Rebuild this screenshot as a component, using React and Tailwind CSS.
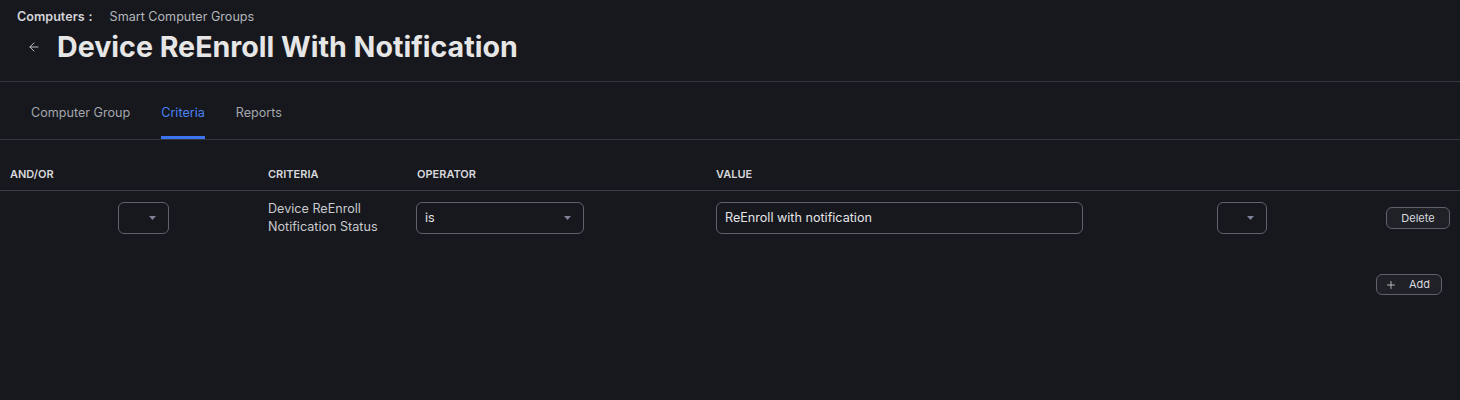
import { ArrowLeft, Plus } from 'lucide-react';

function Caret() {
  return (
    <svg width="7" height="4" viewBox="0 0 7 4" className="fill-[#7d8199]">
      <path d="M0 0h7L3.5 4z" />
    </svg>
  );
}

function Select({ value, className }) {
  return (
    <div
      className={`flex h-8 items-center justify-between rounded-md border border-[#5f626a] pl-2 pr-[12px] text-[12.6px] text-[#e4e4e7] ${className}`}
    >
      <span>{value}</span>
      <Caret />
    </div>
  );
}

export default function App() {
  const tabs = ['Computer Group', 'Criteria', 'Reports'];

  return (
    <div className="min-h-[400px] w-full bg-[#16181d] font-['Inter','Liberation_Sans',sans-serif] text-[#e4e4e7]">
      {/* Header */}
      <div className="border-b border-[#33363d] pl-[17px] pt-[8px] pb-[17px]">
        <div className="flex items-center text-[12.6px] leading-[18px]">
          <span className="font-semibold text-[#d4d4d8]">Computers</span>
          <span className="ml-[4px] font-semibold text-[#d4d4d8]">:</span>
          <span className="ml-[17px] text-[#b4b6bb]">Smart Computer Groups</span>
        </div>
        <div className="mt-[3px] flex items-center">
          <ArrowLeft className="ml-[10px] h-[14px] w-[14px] text-[#c8c9cc]" strokeWidth={1.6} />
          <h1 className="ml-[16px] text-[28.6px] font-bold leading-[35px] text-[#e6e6e6]">
            Device ReEnroll With Notification
          </h1>
        </div>
      </div>

      {/* Tabs */}
      <div className="flex gap-[31px] border-b border-[#33363d] pl-[31px]">
        {tabs.map((t) => (
          <div
            key={t}
            className={`pt-[22px] pb-[14px] text-[12.6px] leading-[18px] border-b-[3px] ${
              t === 'Criteria' ? 'border-[#3b73f0] text-[#4b82f5]' : 'border-transparent text-[#a3a6ac]'
            }`}
          >
            {t}
          </div>
        ))}
      </div>

      {/* Table */}
      <table className="mt-[26px] w-full table-fixed border-collapse">
        <colgroup>
          <col className="w-[258px]" />
          <col className="w-[149px]" />
          <col className="w-[299px]" />
          <col className="w-[501px]" />
          <col className="w-[169px]" />
          <col />
        </colgroup>
        <thead>
          <tr className="border-b border-[#3a3d44] text-left text-[11px] font-semibold uppercase leading-[16px] text-[#d8d8dc]">
            <th className="pb-[8px] pl-[10px] font-semibold">AND/OR</th>
            <th className="pb-[8px] pl-[10px] font-semibold">Criteria</th>
            <th className="pb-[8px] pl-[10px] font-semibold">Operator</th>
            <th className="pb-[8px] pl-[10px] font-semibold">Value</th>
            <th className="pb-[8px]" />
            <th className="pb-[8px]" />
          </tr>
        </thead>
        <tbody>
          <tr className="align-middle">
            <td className="pt-[9px]">
              <Select value="" className="ml-[118px] w-[51px]" />
            </td>
            <td className="pt-[9px] pl-[10px] text-[12.6px] leading-[18px] text-[#c9cacd]">
              Device ReEnroll
              <br />
              Notification Status
            </td>
            <td className="pt-[9px] pl-[9px]">
              <Select value="is" className="w-[168px]" />
            </td>
            <td className="pt-[9px] pl-[10px]">
              <div className="flex h-8 w-[367px] items-center rounded-md border border-[#5f626a] px-2 text-[12.6px] text-[#e4e4e7]">
                ReEnroll with notification
              </div>
            </td>
            <td className="pt-[9px] pl-[10px]">
              <Select value="" className="w-[50px]" />
            </td>
            <td className="align-top pt-[16px] pl-[10px]">
              <button className="block h-[22px] w-[64px] rounded-md border border-[#5f626a] bg-[#1f2127] text-[11px] text-[#d8d8dc]">
                Delete
              </button>
            </td>
          </tr>
        </tbody>
      </table>

      <div className="flex justify-end pr-[18px] pt-[38px]">
        <button className="flex h-[21px] w-[66px] items-center rounded-md border border-[#5f626a] bg-[#1f2127] pl-[8px] text-[11px] text-[#d8d8dc]">
          <Plus className="h-[12px] w-[12px]" strokeWidth={1.6} />
          <span className="ml-[12px]">Add</span>
        </button>
      </div>
    </div>
  );
}
